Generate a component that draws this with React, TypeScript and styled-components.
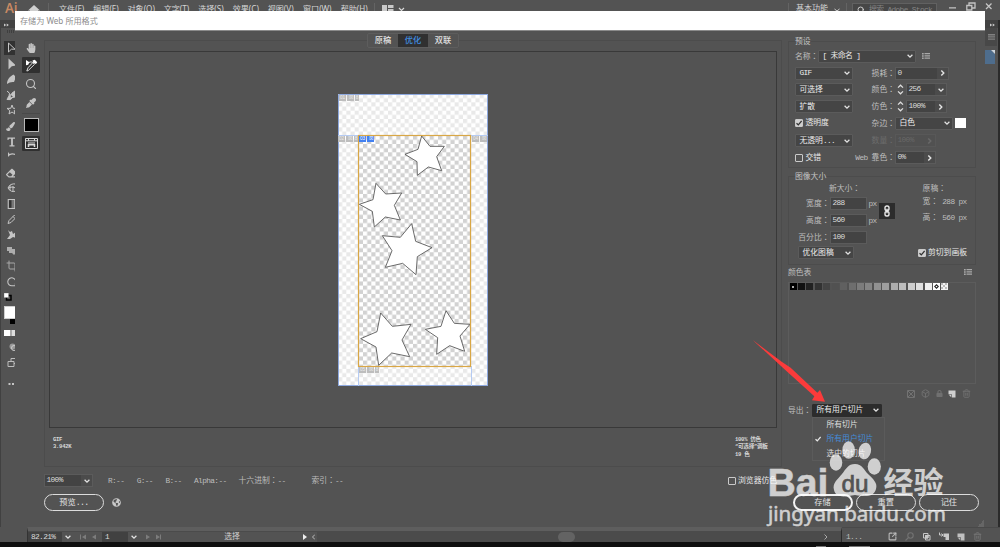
import React from "react";
import styled, { createGlobalStyle, css } from "styled-components";
import { FaHandPaper, FaEyeDropper, FaPaintBrush, FaEraser, FaGlobeAmericas, FaLock } from "react-icons/fa";
import { Box, Search, Trash2, Crop, SquareArrowOutUpRight } from "lucide-react";

const Global = createGlobalStyle`
  * { box-sizing: border-box; }
  html, body { margin: 0; background: #0f0f0f; overflow: hidden; }
  body { font: 7.8px/10px "Liberation Mono", "Noto Sans CJK SC", monospace; color: #dadada; }
  svg { display: block; flex: none; }
`;

/* ---------- shared parts ---------- */

const Latin = styled.span`
  letter-spacing: -0.62px;
  white-space: pre;
`;
const WideColon = styled.span`
  font-family: "Noto Sans CJK TC", sans-serif;
`;

const Window = styled.div`
  position: relative;
  width: 1000px;
  height: 547px;
  display: flex;
  flex-direction: column;
  background: #535353;
  overflow: hidden;
  white-space: nowrap;
`;

const Chevron = ({ size = 6, color = "#e4e4e4" }: { size?: number; color?: string }) => (
  <svg width={size} height={size} viewBox="0 0 6 6" fill="none" stroke={color} strokeWidth="1.3">
    <path d="M0.6 1.8 L3 4.1 L5.4 1.8" />
  </svg>
);
const ChevronRight = () => (
  <svg width="5" height="6" viewBox="0 0 5 6" fill="none" stroke="#e4e4e4" strokeWidth="1.4">
    <path d="M1.3 0.5 L3.8 3 L1.3 5.5" />
  </svg>
);

/* ---------- application frame ---------- */

const AppBar = styled.header`
  display: flex;
  height: 20px;
  flex: none;
  align-items: flex-start;
  padding-left: 5px;
  font-family: "Noto Sans", "Noto Sans CJK SC", sans-serif;
  font-size: 8.1px;
  color: #d5d5d5;
`;
const Brand = styled.div`
  width: 23px;
  font: 13.5px/17px "Open Sans", sans-serif;
  font-weight: 600;
  letter-spacing: -0.3px;
  color: #c98a63;
`;
const BarRule = styled.i<{ $left: number; $right: number }>`
  width: 1px;
  height: 9px;
  margin: 3px ${(p) => p.$right}px 0 ${(p) => p.$left}px;
  background: #646464;
`;
const MenuItem = styled.span<{ $w: number }>`
  width: ${(p) => p.$w}px;
  padding-top: 3.5px;
`;
const BarSpace = styled.span`
  flex: 1;
`;
const Workspace = styled.span`
  padding-top: 3px;
  width: 38px;
  font-size: 8px;
`;
const StockSearch = styled.div`
  display: flex;
  gap: 4px;
  width: 85px;
  height: 17px;
  margin-top: 3px;
  padding: 2px 4px;
  border: 1px solid #616161;
  background: #474747;
  color: #858585;
  font: 7.8px/8px "Liberation Mono", "Noto Sans CJK SC", monospace;
`;
const WindowButtons = styled.div`
  display: flex;
  padding: 2px 6px 0 11px;
`;

const Middle = styled.div`
  display: flex;
  justify-content: space-between;
  height: 507px;
`;
const ToolDock = styled.aside`
  width: 27px;
  border-left: 1px solid #414141;
`;
const DockHead = styled.div<{ $pad: number }>`
  height: 8px;
  padding: 2.5px ${(p) => p.$pad}px;
  background: #424242;
`;
const Grip = styled.div`
  width: 14px;
  height: 3px;
  margin: 2px 0 8.2px 6px;
  background: repeating-linear-gradient(90deg, #3f3f3f 0 1px, #535353 1px 2px);
`;
const DockTool = styled.div<{ $active?: boolean }>`
  display: flex;
  align-items: center;
  width: 20px;
  height: ${(p) => (p.$active ? 14 : 15.57)}px;
  margin: ${(p) => (p.$active ? "0 0 0.8px 3px" : "0 0 0 3px")};
  padding-left: 2px;
  color: #c4c4c4;
  background: ${(p) => (p.$active ? "#323232" : "transparent")};
`;
const FillSwatch = styled.div`
  width: 14px;
  height: 13px;
  margin: 2px 0 0 3px;
  border: 1px solid #cfcfcf;
  background: #fff;
`;
const DockExtra = styled.div<{ $h: number }>`
  display: flex;
  align-items: center;
  height: ${(p) => p.$h}px;
  padding-left: 3px;
`;
const PanelDock = styled.aside`
  width: 15px;
  border-right: 2px solid #2b2b2b;
`;
const PanelTab = styled.div`
  display: flex;
  align-items: center;
  width: 12px;
  height: 18px;
  margin-bottom: 4px;
  padding-left: 3px;
  background: #484848;
`;

const StatusBar = styled.footer`
  display: flex;
  height: 15px;
  flex: none;
  padding-left: 27px;
`;
const StatusLeft = styled.div`
  display: flex;
  align-items: center;
  width: 816px;
  border-top: 4px solid #5e5e5e;
  border-left: 1px solid #333;
  border-right: 1px solid #2b2b2b;
  background: #4b4b4b;
`;
const StatusField = styled.div<{ $w: number }>`
  width: ${(p) => p.$w}px;
  height: 10px;
  padding-left: 3px;
  background: #414141;
  line-height: 11px;
`;
const StatusCell = styled.div<{ $w: number }>`
  display: flex;
  justify-content: center;
  align-items: center;
  gap: 5px;
  width: ${(p) => p.$w}px;
  height: 10px;
  background: #535353;
  color: #d0d0d0;
`;
const ScrollTrack = styled.div`
  display: flex;
  flex: 1;
  align-items: center;
  height: 11px;
`;
const ScrollThumb = styled.div`
  width: 17px;
  height: 10px;
  margin: 0 249px 0 241px;
  border-radius: 5px;
  background: #636363;
`;
const StatusRight = styled.div`
  display: flex;
  flex: 1;
  align-items: center;
  gap: 8px;
  padding: 3px 18px 0 4px;
  border-top: 1px solid #494949;
  color: #bcbcbc;
`;
const Taskbar = styled.div`
  flex: 1;
  display: flex;
  align-items: flex-end;
  gap: 23px;
  padding-left: 816px;
  background: #0f0f0f;
`;
const TaskMark = styled.i<{ $w: number }>`
  width: ${(p) => p.$w}px;
  height: 1px;
  background: #777;
`;

/* ---------- dialog ---------- */

const Dialog = styled.section`
  position: absolute;
  left: 15px;
  top: 11px;
  width: 970px;
  height: 516px;
  background: #535353;
`;
const TitleBar = styled.div`
  height: 20px;
  padding: 4px 5px;
  border-bottom: 1px solid #8b8b8b;
  background: #fff;
  color: #8d8d8d;
  font: 8.1px/12px "Noto Sans", "Noto Sans CJK SC", sans-serif;
`;
const Body = styled.div`
  display: flex;
  height: 496px;
`;
const Tools = styled.div`
  display: flex;
  flex-direction: column;
  align-items: center;
  width: 29px;
  padding: 8px 0 0 3px;
  color: #c4c4c4;
`;
const Tool = styled.div<{ $active?: boolean; $h?: number }>`
  display: flex;
  align-items: center;
  justify-content: center;
  width: 18px;
  height: ${(p) => p.$h ?? 18.4}px;
  border-radius: 1px;
  background: ${(p) => (p.$active ? "#303030" : "transparent")};
`;
const ToolRule = styled.i`
  width: 18px;
  height: 1px;
  margin: 1px 0 4px;
  background: #494949;
`;
const Eyedrop = styled.div`
  width: 15px;
  height: 14px;
  margin-bottom: 4px;
  border: 1px solid #b9b9b9;
  background: #000;
`;

const Center = styled.div`
  width: 738px;
  padding-top: 9px;
`;
const Preview = styled.div`
  display: flex;
  flex-direction: column;
  height: 427px;
  padding: 0 4px;
  border: 1px solid #4c4c4c;
`;
const Tabs = styled.div`
  display: flex;
  align-self: center;
  width: 92px;
  height: 15px;
  margin-top: -8px;
  border: 1px solid #5d5d5d;
  border-radius: 2px;
  background: #535353;
`;
const Tab = styled.div<{ $on?: boolean }>`
  flex: 1;
  text-align: center;
  font-size: 8.2px;
  line-height: 14px;
  font-weight: 500;
  color: ${(p) => (p.$on ? "#3f8de0" : "#e0e0e0")};
  background: ${(p) => (p.$on ? "#303030" : "transparent")};
`;
const Canvas = styled.div`
  display: flex;
  align-items: center;
  justify-content: center;
  height: 377px;
  margin-top: 3px;
  padding-top: 1px;
  border: 1px solid #393939;
`;
const Artboard = styled.div`
  position: relative;
  width: 150px;
  height: 292px;
`;
const SliceTag = styled.span<{ $x: number; $y: number; $on?: boolean }>`
  position: absolute;
  left: ${(p) => p.$x}px;
  top: ${(p) => p.$y}px;
  height: 6px;
  display: flex;
  gap: 1px;
  color: ${(p) => (p.$on ? "#fff" : "#ececec")};
  font: 4.6px/6px "Liberation Sans", sans-serif;
  i {
    font-style: normal;
    width: 7px;
    flex: none;
    text-align: center;
    background: ${(p) => (p.$on ? "#4280f0" : "#bdbdbd")};
  }
  i:nth-child(3) { width: 4px; }
`;
const Info = styled.div`
  display: flex;
  justify-content: space-between;
  padding: 7.5px 1px 0 4px;
  font-size: 5.6px;
  line-height: 7.6px;
  font-weight: 600;
  white-space: pre;
  letter-spacing: -0.3px;
  color: #d8d8d8;
`;
const InfoRight = styled.div`
  width: 41px;
`;
const ReadoutRow = styled.div`
  display: flex;
  align-items: center;
  height: 14px;
  margin-top: 6.5px;
  color: #bdbdbd;
`;
const Readout = styled.span<{ $w: number }>`
  width: ${(p) => p.$w}px;
`;
const ActionRow = styled.div`
  display: flex;
  align-items: center;
  gap: 8px;
  margin-top: 6px;
`;
const Pill = styled.div<{ $bold?: boolean }>`
  width: 60px;
  height: 17px;
  border: 1px solid #dcdcdc;
  border-radius: 9px;
  text-align: center;
  font-size: 8.2px;
  line-height: 16px;
  color: #e2e2e2;
  ${(p) => p.$bold && css`border-width: 2px; border-color: #f2f2f2; line-height: 14px;`}
`;

/* ---------- settings column ---------- */

const Settings = styled.div`
  width: 191px;
  margin-left: 6px;
  padding-top: 10px;
`;
const Group = styled.div<{ $h: number; $mt?: number }>`
  width: 188px;
  height: ${(p) => p.$h}px;
  margin-top: ${(p) => p.$mt ?? 0}px;
  padding: 0 8px 0 6px;
  border: 1px solid #4c4c4c;
`;
const Legend = styled.div`
  width: max-content;
  height: 8px;
  margin-top: -4px;
  line-height: 8px;
  background: #535353;
  color: #c4c4c4;
`;
const Row = styled.div<{ $h?: number }>`
  display: flex;
  align-items: center;
  height: ${(p) => p.$h ?? 17}px;
`;
const Select = styled.div<{ $w: number; $dark?: boolean }>`
  display: flex;
  align-items: center;
  justify-content: space-between;
  width: ${(p) => p.$w}px;
  height: 13px;
  padding: 0 2px 0 3.5px;
  border: 1px solid #5b5b5b;
  border-radius: 1px;
  background: ${(p) => (p.$dark ? "#2c2c2c" : "#454545")};
  ${(p) => p.$dark && css`border-color: #2c2c2c;`}
  color: #ececec;
`;
const Label = styled.span<{ $w?: number; $right?: boolean; $off?: boolean }>`
  width: ${(p) => (p.$w ? p.$w + "px" : "auto")};
  text-align: ${(p) => (p.$right ? "right" : "left")};
  color: ${(p) => (p.$off ? "#6c6c6c" : "#bebebe")};
`;
const FieldBox = styled.div<{ $off?: boolean }>`
  display: flex;
  height: 13px;
  border: 1px solid ${(p) => (p.$off ? "#585858" : "#5b5b5b")};
  color: ${(p) => (p.$off ? "#686868" : "#dcdcdc")};
`;
const Value = styled.div<{ $w: number; $off?: boolean }>`
  width: ${(p) => p.$w}px;
  padding-left: 1.5px;
  line-height: 10px;
  letter-spacing: -0.62px;
  background: ${(p) => (p.$off ? "#515151" : "#434343")};
`;
const FieldButton = styled.div<{ $off?: boolean }>`
  display: flex;
  align-items: center;
  justify-content: center;
  width: 11px;
  background: #4b4b4b;
  opacity: ${(p) => (p.$off ? 0.15 : 1)};
`;
const CheckMark = styled.div<{ $on?: boolean }>`
  width: 8px;
  height: 8px;
  flex: none;
  margin-right: 2.5px;
  border: 1px solid #c9c9c9;
  border-radius: 1px;
  background: ${(p) => (p.$on ? "#cfcfcf" : "transparent")};
`;
const CheckLabel = styled.div<{ $w?: number }>`
  display: flex;
  align-items: center;
  width: ${(p) => (p.$w ? p.$w + "px" : "auto")};
  color: #e8e8e8;
`;
const MatteSwatch = styled.i`
  width: 11px;
  height: 10px;
  margin-left: 2px;
  background: #fff;
`;
const Gap = styled.span<{ $w: number }>`
  width: ${(p) => p.$w}px;
`;
const SizeGrid = styled.div`
  display: flex;
`;
const SizeInputs = styled.div`
  width: 85px;
`;
const SizeValue = styled.div`
  width: 37px;
  height: 13px;
  margin-right: 2px;
  padding-left: 2px;
  border: 1px solid #5b5b5b;
  background: #434343;
  line-height: 10px;
  color: #dcdcdc;
`;
const LinkButton = styled.div`
  display: flex;
  align-items: center;
  justify-content: center;
  width: 16px;
  height: 16px;
  margin: 22px 28px 0 0;
  background: #2c2c2c;
`;
const Original = styled.div`
  width: 45px;
  color: #bebebe;
`;
const Spread = styled.div`
  display: flex;
  align-items: center;
  justify-content: space-between;
  margin-top: 1px;
  padding-left: 3px;
`;
const TableHead = styled.div`
  display: flex;
  align-items: center;
  justify-content: space-between;
  width: 184px;
  height: 12px;
  margin: 2px 0 3px;
  color: #bebebe;
  svg { margin-bottom: 2px; }
`;
const ColorTable = styled.div`
  display: flex;
  align-items: flex-start;
  gap: 1.45px;
  width: 188px;
  height: 102px;
  padding: 0 0 0 0.5px;
  border: 1px solid #5c5c5c;
`;
const Swatch = styled.div<{ $c: string }>`
  display: flex;
  align-items: center;
  justify-content: center;
  width: 7px;
  height: 7px;
  background: ${(p) => p.$c};
`;
const TableTools = styled.div`
  display: flex;
  justify-content: flex-end;
  align-items: center;
  gap: 5.7px;
  width: 183px;
  height: 19px;
  color: #707070;
`;
const ExportRow = styled.div`
  position: relative;
  display: flex;
  align-items: center;
  height: 14px;
`;
const ExportMenu = styled.div`
  position: absolute;
  left: 24px;
  top: 14px;
  width: 73px;
  height: 44px;
  border: 1px solid #5b5b5b;
  background: #535353;
`;
const ExportItem = styled.div<{ $on?: boolean }>`
  display: flex;
  align-items: center;
  height: 14.3px;
  padding-left: ${(p) => (p.$on ? 2 : 13.5)}px;
  gap: 5.5px;
  color: ${(p) => (p.$on ? "#448bd8" : "#dedede")};
`;
const Commands = styled.div`
  display: flex;
  gap: 3.2px;
  margin: 77px 0 0 4.5px;
`;
const Corner = styled.i`
  position: absolute;
  right: 1px;
  bottom: 0;
  width: 7px;
  height: 7px;
  background: linear-gradient(135deg, transparent 50%, #666 50%);
`;
const Overlay = styled.svg`
  position: absolute;
  left: 0;
  top: 0;
`;

/* ---------- drawings ---------- */

const ListIcon = () => (
  <svg width="8" height="6" viewBox="0 0 8 6" fill="#a9a9a9">
    <path d="M0 0h1.7v1.5H0zM2.5 0H8v1.3H2.5zM0 2.2h1.7v1.5H0zM2.5 2.2H8v1.3H2.5zM0 4.4h1.7v1.5H0zM2.5 4.4H8v1.3H2.5z" />
  </svg>
);
const NewIcon = ({ color = "#c0c0c0" }: { color?: string }) => (
  <svg width="8" height="8" viewBox="0 0 8 8" fill={color}>
    <path d="M0.5 0.5H7.5V7.5H3.8V4.2H0.5Z" />
    <path d="M0.8 4.8H3.2V7.2Z" />
  </svg>
);
const ChainIcon = () => (
  <svg width="8" height="12" viewBox="0 0 8 12" fill="none" stroke="#e8e8e8" strokeWidth="1.4">
    <rect x="2" y="1" width="4" height="4.6" rx="1.8" />
    <rect x="2" y="6.4" width="4" height="4.6" rx="1.8" />
    <path d="M4 3.8V8.2" />
  </svg>
);
const DoubleArrow = () => (
  <svg width="5" height="4" viewBox="0 0 5 4" fill="#ccc">
    <path d="M0 0.5L2.2 2L0 3.5ZM2.7 0.5L4.9 2L2.7 3.5Z" />
  </svg>
);
const Tick = ({ color }: { color: string }) => (
  <svg width="6" height="6" viewBox="0 0 6 6" fill="none" stroke={color} strokeWidth="1.2">
    <path d="M0.5 3.2L2.3 4.8L5.6 1" />
  </svg>
);
const Stepper = () => (
  <svg width="11" height="13" viewBox="0 0 11 13" fill="none" stroke="#e0e0e0" strokeWidth="1.2">
    <path d="M3 4.6L5.5 2.2L8 4.6M3 8.4L5.5 10.8L8 8.4" />
  </svg>
);
const SliceSelectIcon = () => (
  <svg width="13" height="13" viewBox="0 0 13 13">
    <path d="M1 1L4.4 3.2L3.2 5.8L1 6.3ZM7.5 1.5L9.8 0.8L12.2 3.2L11 5L8.2 4Z" fill="#fff" />
    <path d="M4 3.5C5.5 2.5 7 3 7.8 3.6L9.5 5.4L3.2 11.6L1.8 12L3 8.8L7.8 3.6" fill="none" stroke="#ddd" strokeWidth="1" />
  </svg>
);
const SliceViewIcon = () => (
  <svg width="13" height="11" viewBox="0 0 13 11" fill="none" stroke="#d8d8d8">
    <path d="M0.5 0.5H12.5V10.5H0.5ZM0.5 2.8H12.5M3.5 0.5V2.8M9.5 0.5V2.8" />
    <path d="M3 5H10" />
    <path d="M3.5 9V6.8H9.5V9" strokeWidth="1.5" />
  </svg>
);

const dockPaths: React.ReactNode[] = [
  <path key="a" d="M2.5 1L9 7.2H5.4L2.5 10Z" fill="none" stroke="currentColor" strokeWidth="1" />,
  <path key="b" d="M2.5 0.5V11.5L5.8 8.2L10 7.4Z" />,
  <path key="c" d="M1 11C1 7 3 4 7.5 1.5L10 4L8 9Q4 8.5 1 11ZM1 11L5.5 6.5" />,
  <path key="d" d="M1 2Q5 4 3 7T1 10.5Q5 12 7 8M4 9C4 5 7 3 9 2V8Z" stroke="currentColor" strokeWidth="1" />,
  <path key="e" d="M6 1L7.2 4.3L11 4.4L8.2 6.6L9 10L6 8L3 10L3.8 6.6L1 4.4L4.8 4.3Z" fill="none" stroke="currentColor" strokeWidth="1" />,
  null,
  <path key="g" d="M1.5 1.5H10.5V4H9.7L9 2.7H6.9V9.3H8.5V10.5H3.5V9.3H5.1V2.7H3L2.3 4H1.5Z" />,
  <path key="h" d="M2 1V6L3.4 4.6Q6 3 9 4V2.8Q6 1.6 3.6 3Z" />,
  null,
  <path key="j" d="M10 2Q4 1 2 6Q5 11 10 9M2 6Q6 4 10 6M4 3V8.5M7 4V10" fill="none" stroke="currentColor" />,
  <g key="k"><rect x="2.2" y="1.5" width="6.6" height="9" fill="#777" stroke="currentColor" /><path d="M3 2.2h2.5v7.6H3z" fill="#333" /></g>,
  <path key="l" d="M2 10.5L3 7.5L8.5 2L10.5 4L5 9.5ZM7 3.5L9 5.5" fill="none" stroke="currentColor" />,
  <path key="m" d="M2 1L4 3L6 2L7 5L10 3V9L7 8L4 10H1L4 6Z" />,
  <path key="n" d="M1 2H6V4H10V8L8 10L6 8H3V6H1Z" opacity=".8" />,
  null,
  <path key="p" d="M9 9.8H6A4 4 0 1 1 9.4 7.5V10.3" fill="none" stroke="currentColor" strokeWidth="1.1" />,
];
const DockGlyph = ({ i }: { i: number }) => {
  if (i === 5) return <FaPaintBrush size={9} />;
  if (i === 8) return <FaEraser size={10} />;
  if (i === 14) return <Crop size={12} strokeWidth={2} opacity={0.75} />;
  return <svg width="12" height="12" viewBox="0 0 12 12" fill="currentColor">{dockPaths[i]}</svg>;
};

const stars: { dy: number; pts: string }[] = [
  { dy: -9, pts: "275,153 300,184 343,184 320,215 335,257 295,246 262,271 261,230 225,208 264,193" },
  { dy: -9, pts: "138,295 167,327 215,324 193,361 211,405 166,396 133,426 127,379 88,358 129,344" },
  { dy: 121, pts: "245,26 257,79 306,98 262,125 258,179 218,145 166,157 186,107 157,62 211,67" },
  { dy: 121, pts: "152,294 187,334 243,328 216,375 239,425 185,414 146,451 138,396 92,371 141,350" },
  { dy: 121, pts: "348,287 373,325 420,328 390,363 404,409 359,392 320,418 323,368 286,343 333,334" },
];
const Artwork = () => (
  <svg width="150" height="292" viewBox="0 0 150 292">
    <defs>
      <pattern id="outer" width="8.33" height="8.33" patternUnits="userSpaceOnUse">
        <rect width="8.33" height="8.33" fill="#fff" />
        <path d="M0 0h4.17v4.17H0zM4.17 4.17h4.17v4.17H4.17z" fill="#e9e9e9" />
      </pattern>
      <pattern id="inner" width="8.33" height="8.33" patternUnits="userSpaceOnUse">
        <rect width="8.33" height="8.33" fill="#fff" />
        <path d="M0 0h4.17v4.17H0zM4.17 4.17h4.17v4.17H4.17z" fill="#d2d2d2" />
      </pattern>
    </defs>
    <rect width="150" height="292" fill="url(#outer)" />
    <rect x="20.5" y="41" width="113" height="231.5" fill="url(#inner)" />
    <path d="M0.5 292V0.5H149.5M0 291.5H150M149.5 0V292" fill="none" stroke="#8ea9df" />
    <path d="M0 41.5H20M133 41.5H150M20.5 272V292M133.5 272V292" stroke="#b5cbf3" />
    {stars.map((s) => (
      <polygon key={s.pts} points={s.pts} transform={`translate(-8 ${s.dy}) scale(.33333)`} fill="#fff" stroke="#555" strokeWidth="2.6" />
    ))}
    <rect x="20.5" y="41.5" width="112" height="231" fill="none" stroke="#d9a745" strokeWidth="1.2" />
  </svg>
);

const Caption = ({ text, w, right, off, lead }: { text: string; w?: number; right?: boolean; off?: boolean; lead?: string }) => (
  <Label $w={w} $right={right} $off={off}>
    {lead && <Latin>{lead}</Latin>}{text}<WideColon>：</WideColon>
  </Label>
);
const Field = ({ value, w, off, step, down }: { value: string; w: number; off?: boolean; step?: boolean; down?: boolean }) => (
  <>
    {step && <Stepper />}
    <FieldBox $off={off}>
      <Value $w={w} $off={off}>{value}</Value>
      <FieldButton $off={off}>{down ? <Chevron /> : <ChevronRight />}</FieldButton>
    </FieldBox>
  </>
);
const Check = ({ on, children, w }: { on?: boolean; children: React.ReactNode; w?: number }) => (
  <CheckLabel $w={w}>
    <CheckMark $on={on}>{on && <Tick color="#333" />}</CheckMark>
    {children}
  </CheckLabel>
);

const menus: [string, number][] = [["文件(F)", 34.2], ["编辑(E)", 34.3], ["对象(O)", 36.2], ["文字(T)", 34.5], ["选择(S)", 34.5], ["效果(C)", 35], ["视图(V)", 35.3], ["窗口(W)", 37.7], ["帮助(H)", 28]];
const greys = ["#000", "#111", "#222", "#333", "#444", "#515151", "#606060", "#6e6e6e", "#7c7c7c", "#858585", "#919191", "#9e9e9e", "#adadad", "#bdbdbd", "#cdcdcd", "#dedede", "#efefef", "#fff"];

export default function App() {
  return (
    <Window>
      <Global />
      <AppBar>
        <Brand>Ai</Brand>
        <svg width="12" height="16" viewBox="0 0 12 16" fill="#cfcfcf"><path d="M6 5L12 10.5H10V16H2V10.5H0Z" /></svg>
        <BarRule $left={8} $right={10} />
        {menus.map(([m, w]) => <MenuItem key={m} $w={w}>{m}</MenuItem>)}
        <BarRule $left={5} $right={7} />
        <svg width="23" height="16" viewBox="0 -4 23 16">
          <path d="M0 1H5V9H0zM6 1H11.5V4H6zM6 5H11.5V9H6z" fill="#c8c8c8" />
          <path d="M17 4L19.5 6.5L22 4" fill="none" stroke="#d8d8d8" strokeWidth="1.2" />
        </svg>
        <BarSpace />
        <BarRule $left={0} $right={7} />
        <Workspace>基本功能</Workspace>
        <svg width="6" height="12" viewBox="0 0 6 12" fill="none" stroke="#d0d0d0"><path d="M0.5 9L3 11L5.5 9" /></svg>
        <BarRule $left={6} $right={5} />
        <StockSearch>
          <Search size={8} strokeWidth={3} color="#cfcfcf" />
          <Latin>搜索 Adobe Stock</Latin>
        </StockSearch>
        <WindowButtons>
          <svg width="46" height="10" viewBox="0 0 46 10" fill="none" stroke="#c4c4c4" strokeWidth="1.3">
            <path d="M1 5.8H8M18.8 3.5H23.8V8H18.8ZM21 3.3V1H27V6H24M38 1.5L43.5 7M43.5 1.5L38 7" />
          </svg>
        </WindowButtons>
      </AppBar>

      <Middle>
        <ToolDock>
          <DockHead $pad={3}><DoubleArrow /></DockHead>
          <Grip />
          {dockPaths.map((_, i) => <DockTool key={i} $active={i === 0}><DockGlyph i={i} /></DockTool>)}
          <DockExtra $h={15}>
            <svg width="8" height="8" viewBox="0 0 8 8"><rect x="2.5" y="2.5" width="4.5" height="4.5" fill="none" stroke="#000" strokeWidth="1.5" /><rect width="4.5" height="4.5" fill="#fff" stroke="#999" strokeWidth=".5" /></svg>
          </DockExtra>
          <FillSwatch />
          <svg width="16" height="5" viewBox="0 0 16 5"><path d="M9 0H16V5H9Z" fill="#000" /></svg>
          <DockExtra $h={18}>
            <svg width="14" height="6"><rect width="6" height="6" fill="#fff" /><rect x="6" width="2" height="6" fill="#aaa" /><rect x="8" width="6" height="6" fill="#ddd" /></svg>
          </DockExtra>
          <DockExtra $h={10}>
            <svg width="14" height="8"><circle cx="8.5" cy="3.5" r="3" fill="#999" /><circle cx="10" cy="5" r="2.5" fill="none" stroke="#ccc" /></svg>
          </DockExtra>
          <DockExtra $h={20}>
            <svg width="14" height="9" fill="none" stroke="#bdbdbd"><path d="M4 3.5H10V8.5H4ZM7 3V0.5H12V5.5H10" /></svg>
          </DockExtra>
          <DockExtra $h={24}>
            <svg width="14" height="4" fill="#c4c4c4"><path d="M4.5 1h2v2h-2zM8 1h2v2H8z" /></svg>
          </DockExtra>
        </ToolDock>
        <PanelDock>
          <DockHead $pad={5}><DoubleArrow /></DockHead>
          <PanelTab><svg width="7" height="6" fill="#818181"><path d="M0 0H7V1.4H0zM0 2.2H7V3.6H0zM0 4.4H7V5.8H0z" /></svg></PanelTab>
          <svg width="10" height="14" viewBox="0 0 10 14"><path d="M0 0H6L10 4V14H0Z" fill="#4e6d8d" /><path d="M6 0H10V4Z" fill="#ccd5dd" /></svg>
        </PanelDock>
      </Middle>

      <StatusBar>
        <StatusLeft>
          <StatusField $w={34}><Latin>82.21%</Latin></StatusField>
          <StatusCell $w={12}><Chevron /></StatusCell>
          <StatusCell $w={28}>
            <svg width="17" height="6" fill="#7c7c7c"><path d="M0 0.5H1V5.5H0zM6 0.5V5.5L2 3ZM16 0.5V5.5L12 3Z" /></svg>
          </StatusCell>
          <StatusField $w={26}>1</StatusField>
          <StatusCell $w={11}><Chevron /></StatusCell>
          <StatusCell $w={28}>
            <svg width="17" height="6" fill="#7c7c7c"><path d="M1 0.5V5.5L5 3ZM11 0.5V5.5L15 3ZM15 0.5H16V5.5H15z" /></svg>
          </StatusCell>
          <StatusCell $w={130}>选择</StatusCell>
          <StatusCell $w={20}>
            <svg width="15" height="6"><path d="M3 0L7 3L3 6Z" fill="#eee" /><path d="M15 0.5L12.5 3L15 5.5" fill="none" stroke="#bbb" /></svg>
          </StatusCell>
          <ScrollTrack><ScrollThumb /><svg width="4" height="6" fill="none" stroke="#aaa"><path d="M0.5 0.5L3 3L0.5 5.5" /></svg></ScrollTrack>
        </StatusLeft>
        <StatusRight>
          <Label $w={34}><Latin>1...</Latin></Label>
          <SquareArrowOutUpRight size={9} strokeWidth={2.8} />
          <svg width="9" height="9" viewBox="0 0 9 9" fill="none" stroke="#737373" strokeWidth="1.1"><circle cx="5.5" cy="3.5" r="2.7" /><path d="M3.5 5.5L0.5 8.5" /></svg>
          <svg width="9" height="9" viewBox="0 0 9 9" fill="none" stroke="#c8c8c8"><path d="M1.5 1.5H6V6H1.5zM3.5 3.5H8V8H3.5z" /><path d="M3.5 3.5H6V6H3.5z" fill="#c8c8c8" /></svg>
          <svg width="10" height="9" viewBox="0 0 10 9"><path d="M0.5 0.5V3H4M2.5 1.5L4 3L2.5 4.5" fill="none" stroke="#c8c8c8" /><path d="M4.5 1.5H10V8H6.5V5H4.5Z" fill="#c8c8c8" /></svg>
          <NewIcon />
          <Trash2 size={9} strokeWidth={2.6} color="#747474" />
        </StatusRight>
      </StatusBar>
      <Taskbar><TaskMark $w={10} /><TaskMark $w={21} /></Taskbar>

      <Dialog>
        <TitleBar>存储为 Web 所用格式</TitleBar>
        <Body>
          <Tools>
            <Tool><FaHandPaper size={10} /></Tool>
            <Tool $active $h={16}><SliceSelectIcon /></Tool>
            <Tool $h={21}><Search size={12} strokeWidth={2.2} /></Tool>
            <Tool $h={18}><FaEyeDropper size={10} /></Tool>
            <ToolRule />
            <Eyedrop />
            <Tool $active $h={15}><SliceViewIcon /></Tool>
          </Tools>

          <Center>
            <Preview>
              <Tabs><Tab>原稿</Tab><Tab $on>优化</Tab><Tab>双联</Tab></Tabs>
              <Canvas>
                <Artboard>
                  <Artwork />
                  <SliceTag $x={1} $y={1}><i>01</i><i>☒</i><i>8</i></SliceTag>
                  <SliceTag $x={0} $y={42}><i>02</i><i>☒</i><i>8</i></SliceTag>
                  <SliceTag $x={21} $y={42} $on><i>03</i><i>☒</i></SliceTag>
                  <SliceTag $x={134} $y={42}><i>04</i><i>☒</i></SliceTag>
                  <SliceTag $x={21} $y={273}><i>05</i><i>☒</i><i>8</i></SliceTag>
                </Artboard>
              </Canvas>
              <Info>
                <div>GIF<br />3.942K</div>
                <InfoRight>100% 仿色<br />“可选择”调板<br />19 色</InfoRight>
              </Info>
            </Preview>
            <ReadoutRow>
              <FieldBox><Value $w={36}>100%</Value><FieldButton><Chevron /></FieldButton></FieldBox>
              <Gap $w={15} />
              <Readout $w={28.7}><Latin>R:--</Latin></Readout>
              <Readout $w={28.7}><Latin>G:--</Latin></Readout>
              <Readout $w={28.7}><Latin>B:--</Latin></Readout>
              <Readout $w={44.5}><Latin>Alpha:--</Latin></Readout>
              <Readout $w={73}>十六进制<WideColon>：</WideColon><Latin>--</Latin></Readout>
              <Readout $w={416}>索引<WideColon>：</WideColon><Latin>--</Latin></Readout>
              <Check>浏览器仿色</Check>
            </ReadoutRow>
            <ActionRow>
              <Pill>预览<Latin>...</Latin></Pill>
              <FaGlobeAmericas size={9} color="#c8c8c8" />
            </ActionRow>
          </Center>

          <Settings>
            <Group $h={127}>
              <Legend>预设</Legend>
              <Row $h={20}>
                <Caption text="名称" w={23} />
                <Select $w={98}><Latin>[ 未命名 ]</Latin><Chevron /></Select>
                <Gap $w={6} />
                <ListIcon />
              </Row>
              <Row $h={14}><Select $w={58}><Latin>GIF</Latin><Chevron /></Select><Caption text="损耗" w={42} right /><Field value="0" w={41} /></Row>
              <Row $h={19}><Select $w={58}>可选择<Chevron /></Select><Caption text="颜色" w={42} right /><Field value="256" w={28} step down /></Row>
              <Row $h={15}><Select $w={58}>扩散<Chevron /></Select><Caption text="仿色" w={42} right /><Field value="100%" w={28} step /></Row>
              <Row $h={18}><Check w={58} on>透明度</Check><Caption text="杂边" w={42} right /><Select $w={58}>白色<Chevron /></Select><MatteSwatch /></Row>
              <Row><Select $w={58}><span>无透明<Latin>...</Latin></span><Chevron /></Select><Caption text="数量" w={42} right off /><Field value="100%" w={28} off /></Row>
              <Row><Check w={42}>交错</Check><Caption lead="Web " text="靠色" w={58} right /><Field value="0%" w={28} /></Row>
            </Group>

            <Group $h={89} $mt={8}>
              <Legend>图像大小</Legend>
              <SizeGrid>
                <SizeInputs>
                  <Row $h={14}><Gap $w={34} /><Caption text="新大小" /></Row>
                  <Row><Caption text="宽度" w={34.5} right /><SizeValue><Latin>288</Latin></SizeValue><Label><Latin>px</Latin></Label></Row>
                  <Row><Caption text="高度" w={34.5} right /><SizeValue><Latin>560</Latin></SizeValue><Label><Latin>px</Latin></Label></Row>
                  <Row $h={16}><Caption text="百分比" w={34.5} right /><SizeValue><Latin>100</Latin></SizeValue></Row>
                </SizeInputs>
                <LinkButton><ChainIcon /></LinkButton>
                <Original>
                  <Row $h={14}><Caption text="原稿" /></Row>
                  <Row $h={13}><Caption text="宽" /><Latin> 288 px</Latin></Row>
                  <Row $h={19}><Caption text="高" /><Latin> 560 px</Latin></Row>
                </Original>
              </SizeGrid>
              <Spread>
                <Select $w={56}>优化图稿<Chevron /></Select>
                <Check on>剪切到画板</Check>
              </Spread>
            </Group>

            <TableHead>颜色表<ListIcon /></TableHead>
            <ColorTable>
              {greys.map((c, i) => (
                <Swatch key={c} $c={c}>
                  {i === 0 && <svg width="2" height="2"><rect width="2" height="2" fill="#aaa" /></svg>}
                  {i === 17 && <svg width="5" height="5"><path d="M2.5 0L5 2.5L2.5 5L0 2.5Z" fill="#222" /><circle cx="2.5" cy="2.5" r=".8" fill="#fff" /></svg>}
                </Swatch>
              ))}
              <Swatch $c="#f4f4f4"><svg width="7" height="7"><path d="M0 0h2v2H0zM4 0h2v2H4zM2 2h2v2H2zM0 4h2v2H0zM4 4h2v2H4z" fill="#bbb" /></svg></Swatch>
            </ColorTable>
            <TableTools>
              <svg width="8" height="8" fill="none" stroke="#727272"><path d="M0.5 0.5H7.5V7.5H0.5ZM1 1L7 7M7 1L1 7" /></svg>
              <Box size={9} strokeWidth={2.6} />
              <FaLock size={7} />
              <NewIcon color="#cfcfcf" />
              <Trash2 size={9} strokeWidth={2.6} />
            </TableTools>
            <ExportRow>
              <Caption text="导出" w={24} />
              <Select $w={70} $dark>所有用户切片<Chevron /></Select>
              <ExportMenu>
                <ExportItem>所有切片</ExportItem>
                <ExportItem $on><Tick color="#e8e8e8" />所有用户切片</ExportItem>
                <ExportItem>选中的切片</ExportItem>
              </ExportMenu>
            </ExportRow>
            <Commands><Pill $bold>存储</Pill><Pill>重置</Pill><Pill>记住</Pill></Commands>
          </Settings>
        </Body>
        <Corner />
      </Dialog>

      <Overlay width="1000" height="547" viewBox="0 0 1000 547">
        <polygon transform="translate(740 330) scale(.33333)" points="38,30 125,95 152,113 232,188 240,180 255,215 216,211 223,199 140,124" fill="#fb3b3b" />
        <g fill="#fff" opacity=".72">
          <text x="767.5" y="495.5" fontFamily="Liberation Sans" fontWeight="700" fontSize="39.5" textLength="61" lengthAdjust="spacingAndGlyphs" stroke="#fff" strokeWidth=".5">Bai</text>
          <ellipse cx="836" cy="462.5" rx="6.3" ry="8.2" />
          <ellipse cx="848.6" cy="450" rx="6.2" ry="8.8" />
          <ellipse cx="864.8" cy="451" rx="6.2" ry="8.4" transform="rotate(12 864.8 451)" />
          <ellipse cx="874.3" cy="466.5" rx="6.6" ry="8.2" />
          <path d="M855 464C862 464 864 470 868 474C873 479 878 483 876 489C874 497 866 497 855 495C844 497 836 498 834 490C832 483 838 479 842 474C846 469 848 464 855 464Z" />
          <text x="883.5" y="492.5" fontFamily="Noto Sans CJK SC" fontWeight="700" fontSize="30" textLength="60" lengthAdjust="spacingAndGlyphs">经验</text>
          <text x="768" y="520.5" fontFamily="Noto Sans" fontSize="20" textLength="178" lengthAdjust="spacingAndGlyphs" stroke="#fff" strokeWidth=".5">jingyan.baidu.com</text>
        </g>
        <text x="841.5" y="492" fontFamily="Liberation Sans" fontSize="24" textLength="27" lengthAdjust="spacingAndGlyphs" fill="#535353" stroke="#535353" strokeWidth=".7">du</text>
      </Overlay>
    </Window>
  );
}
